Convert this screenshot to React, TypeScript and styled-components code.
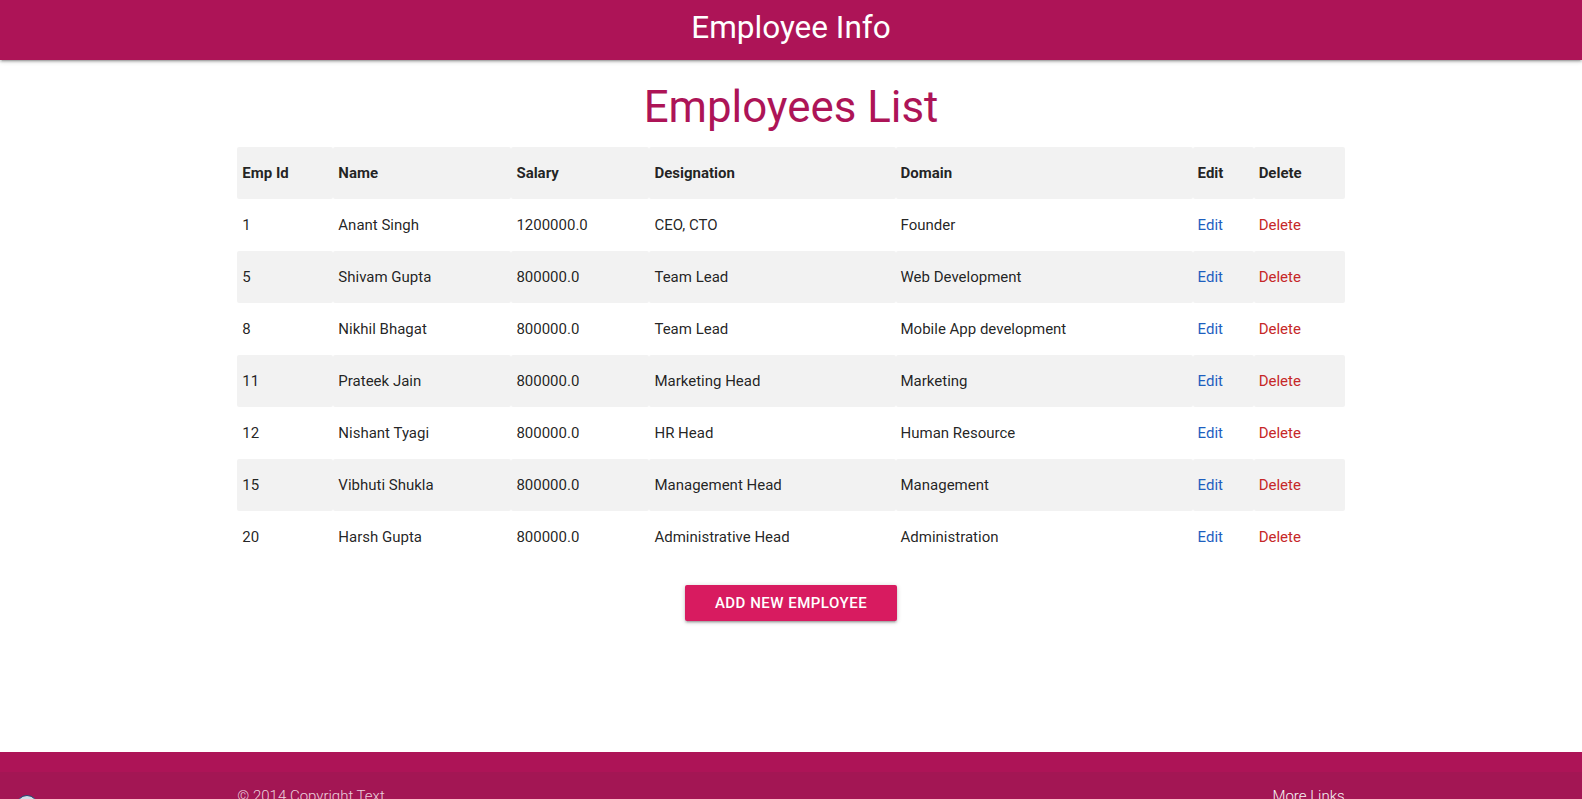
import React from "react";
import styled, { createGlobalStyle } from "styled-components";

const GlobalStyle = createGlobalStyle`
  html { font-size: 15px; }
  body {
    margin: 0;
    font-family: Roboto, "Liberation Sans", sans-serif;
    font-weight: 400;
    color: rgba(0, 0, 0, 0.87);
    line-height: 1.5;
    background: #fff;
  }
  * { box-sizing: border-box; }
`;

const Page = styled.div`
  display: flex;
  flex-direction: column;
  min-height: 100vh;
  position: relative;
`;

const Nav = styled.nav`
  height: 60px;
  background: #ad1457;
  color: #fff;
  text-align: center;
  box-shadow: 0 2px 2px 0 rgba(0, 0, 0, 0.14), 0 3px 1px -2px rgba(0, 0, 0, 0.12),
    0 1px 5px 0 rgba(0, 0, 0, 0.2);
  position: relative;
  z-index: 2;
`;

const Brand = styled.a`
  display: inline-block;
  font-size: 31.5px;
  line-height: 55px;
  color: #fff;
  text-decoration: none;
`;

const Main = styled.main`
  flex: 1 0 auto;
  padding-bottom: 131px;
`;

const Container = styled.div`
  width: 70%;
  margin: 0 auto;
`;

const Title = styled.h3`
  font-size: 43.8px;
  line-height: 48px;
  font-weight: 400;
  color: #ad1457;
  text-align: center;
  margin: 23px 0 15.7px;
`;

const Table = styled.table`
  width: 100%;
  border-collapse: collapse;
  border-spacing: 0;
  table-layout: fixed;
  font-size: 15px;
`;

const Row = styled.tr<{ $shade?: boolean }>`
  background: ${(p) => (p.$shade ? "#f2f2f2" : "transparent")};
`;

const Th = styled.th<{ $w: number }>`
  width: ${(p) => p.$w}px;
  padding: 15px 5px;
  line-height: 22px;
  text-align: left;
  vertical-align: middle;
  font-weight: 700;
  border-radius: 2px;
  color: rgba(0, 0, 0, 0.87);
`;

const Td = styled.td`
  padding: 15px 5px;
  line-height: 22px;
  text-align: left;
  vertical-align: middle;
  border-radius: 2px;
  color: rgba(0, 0, 0, 0.87);
  white-space: nowrap;
`;

const ActionLink = styled.a<{ $tone: "edit" | "delete" }>`
  color: ${(p) => (p.$tone === "edit" ? "#1e5fbf" : "#c62828")};
  text-decoration: none;
  cursor: pointer;
`;

const ButtonRow = styled.div`
  display: flex;
  justify-content: center;
  margin-top: 22px;
`;

const AddButton = styled.button`
  height: 36px;
  line-height: 36px;
  padding: 0 30px;
  border: none;
  border-radius: 2px;
  background: #d81b60;
  color: #fff;
  font-family: Roboto, "Liberation Sans", sans-serif;
  font-size: 15px;
  font-weight: 500;
  letter-spacing: 0.5px;
  text-transform: uppercase;
  cursor: pointer;
  box-shadow: 0 2px 2px 0 rgba(0, 0, 0, 0.14), 0 3px 1px -2px rgba(0, 0, 0, 0.12),
    0 1px 5px 0 rgba(0, 0, 0, 0.2);
`;

const Footer = styled.footer`
  background: #ad1457;
  padding-top: 20px;
`;

const Copyright = styled.div`
  min-height: 50px;
  padding: 10px 0;
  display: flex;
  align-items: center;
  background: rgba(51, 51, 51, 0.08);
  color: rgba(255, 255, 255, 0.8);
  font-size: 15px;
  font-weight: 300;
`;

const CopyrightInner = styled(Container)`
  display: flex;
  justify-content: space-between;
  align-items: center;
`;

const MoreLinks = styled.a`
  color: #f5f5f5;
  text-decoration: none;
`;

const FloatBubble = styled.div`
  position: absolute;
  left: 16px;
  top: 795px;
  width: 22px;
  height: 22px;
  border-radius: 50%;
  background: #d3dce6;
  border: 1.5px solid #1d4a72;
  z-index: 5;
`;

const columns = [
  { label: "Emp Id", w: 96 },
  { label: "Name", w: 178 },
  { label: "Salary", w: 138 },
  { label: "Designation", w: 246 },
  { label: "Domain", w: 297 },
  { label: "Edit", w: 61 },
  { label: "Delete", w: 91 },
];

const employees = [
  { id: 1, name: "Anant Singh", salary: "1200000.0", designation: "CEO, CTO", domain: "Founder" },
  { id: 5, name: "Shivam Gupta", salary: "800000.0", designation: "Team Lead", domain: "Web Development" },
  { id: 8, name: "Nikhil Bhagat", salary: "800000.0", designation: "Team Lead", domain: "Mobile App development" },
  { id: 11, name: "Prateek Jain", salary: "800000.0", designation: "Marketing Head", domain: "Marketing" },
  { id: 12, name: "Nishant Tyagi", salary: "800000.0", designation: "HR Head", domain: "Human Resource" },
  { id: 15, name: "Vibhuti Shukla", salary: "800000.0", designation: "Management Head", domain: "Management" },
  { id: 20, name: "Harsh Gupta", salary: "800000.0", designation: "Administrative Head", domain: "Administration" },
];

export default function App() {
  return (
    <>
      <GlobalStyle />
      <Page>
        <Nav>
          <Brand href="#">Employee Info</Brand>
        </Nav>
        <Main>
          <Container>
            <Title>Employees List</Title>
            <Table>
              <thead>
                <Row $shade>
                  {columns.map((c) => (
                    <Th key={c.label} $w={c.w}>
                      {c.label}
                    </Th>
                  ))}
                </Row>
              </thead>
              <tbody>
                {employees.map((e, i) => (
                  <Row key={e.id} $shade={i % 2 === 1}>
                    <Td>{e.id}</Td>
                    <Td>{e.name}</Td>
                    <Td>{e.salary}</Td>
                    <Td>{e.designation}</Td>
                    <Td>{e.domain}</Td>
                    <Td>
                      <ActionLink $tone="edit">Edit</ActionLink>
                    </Td>
                    <Td>
                      <ActionLink $tone="delete">Delete</ActionLink>
                    </Td>
                  </Row>
                ))}
              </tbody>
            </Table>
            <ButtonRow>
              <AddButton>Add New Employee</AddButton>
            </ButtonRow>
          </Container>
        </Main>
        <Footer>
          <Copyright>
            <CopyrightInner>
              <span>© 2014 Copyright Text</span>
              <MoreLinks href="#">More Links</MoreLinks>
            </CopyrightInner>
          </Copyright>
        </Footer>
        <FloatBubble />
      </Page>
    </>
  );
}
